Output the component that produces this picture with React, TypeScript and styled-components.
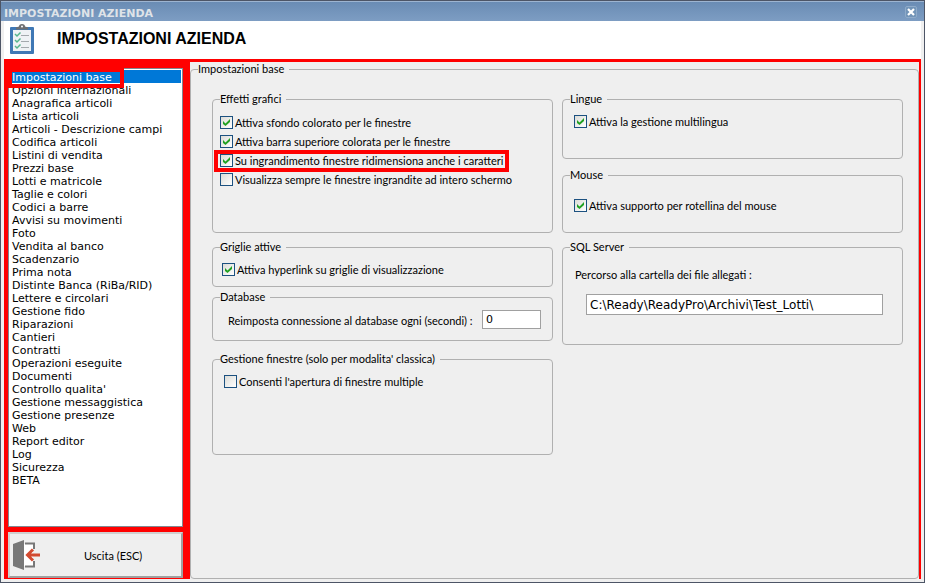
import React from "react";
import styled, { createGlobalStyle } from "styled-components";

const ui = 'Lato, "Liberation Sans", sans-serif';
const wide = '"DejaVu Sans", sans-serif';

const GlobalStyle = createGlobalStyle`
  * { box-sizing: border-box; }
  body { margin: 0; background: #efefef; color: #000; font: 11px/14px ${ui}; }
  button, input { font: inherit; color: inherit; }
`;

const Window = styled.div`
  display: flex;
  flex-direction: column;
  min-height: 100vh;
  border: 1px solid #4d5566;
  background: #efefef;
`;

const TitleBar = styled.header`
  display: flex;
  align-items: center;
  justify-content: space-between;
  height: 20px;
  padding: 4px 7px 0 3px;
  border-top: 1px solid #9db4d0;
  background: linear-gradient(#6a8cb4, #7d9dc3);
  color: #dfe3e8;
  font: bold 11px/14px ${wide};
`;

const CloseButton = styled.button`
  display: grid;
  place-items: center;
  align-self: flex-start;
  width: 12px;
  height: 12px;
  padding: 0;
  border: 1px solid #8fabc9;
  border-radius: 2px;
  background: #7294b8;
`;

const Heading = styled.div`
  display: flex;
  align-items: center;
  gap: 22px;
  height: 38px;
  margin: 0 3px;
  padding: 0 0 2px 5px;
  background: #fff;

  h1 { margin: 0; font: bold 16px/20px "Liberation Sans", sans-serif; }
`;

const Body = styled.div`
  display: flex;
  flex: 1;
  margin: 0 3px 3px;
  border: solid #f00;
  border-width: 3px 2px 0 4px;
`;

const Sidebar = styled.nav`
  display: flex;
  flex-direction: column;
  gap: 5px;
  flex: 0 0 182px;
  padding: 6px 7px 1px 0;
  background: #f00;
`;

const List = styled.ul`
  flex: 1;
  margin: 0;
  padding: 1px;
  list-style: none;
  background: #fff;
  border: 1px solid #828790;
  font: 11px/14px ${wide};
`;

const Item = styled.li<{ $selected?: boolean }>`
  position: relative;
  height: 13px;
  padding-left: 2px;
  background: ${(p) => (p.$selected ? "#0078d7" : "transparent")};

  a {
    display: block;
    color: ${(p) => (p.$selected ? "#fff" : "#000")};
    line-height: 15px;
    text-decoration: none;
    white-space: nowrap;
  }
`;

const ItemMarker = styled.span`
  position: absolute;
  z-index: 1;
  inset: -2px auto -5px -2px;
  width: 116px;
  border: 4px solid #f00;
`;

const ExitButton = styled.button`
  display: flex;
  align-items: center;
  height: 46px;
  padding: 0 3px;
  border: 2px solid;
  border-color: #d0d0d0 #a0a0a0 #a0a0a0 #d0d0d0;
  background: #efefef;

  span { flex: 1; padding: 2px 0 0 43px; text-align: left; }
`;

const Group = styled.fieldset<{ $height?: number; $gap?: number }>`
  min-width: 0;
  min-height: ${(p) => p.$height ?? 0}px;
  margin: ${(p) => p.$gap ?? 0}px 0 0;
  padding: 0 7px;
  border: 1px solid #b0b0b0;
  border-radius: 4px;

  > legend { height: 14px; padding: 0 5px 0 0; }
`;

const Page = styled(Group)`
  flex: 1;
`;

const Columns = styled.div`
  display: grid;
  grid-template-columns: repeat(2, minmax(0, 1fr));
  gap: 9px;
  padding: 16px 8px 16px 14px;
`;

const Options = styled.div<{ $top: number; $indent?: number }>`
  display: flex;
  flex-direction: column;
  align-items: flex-start;
  padding: ${(p) => p.$top}px 0 0 ${(p) => p.$indent ?? 0}px;
`;

const CheckLabel = styled.label<{ $marked?: boolean }>`
  position: relative;
  display: flex;
  align-items: center;
  gap: 2px;
  height: 19px;
  white-space: nowrap;

  &::after {
    content: "";
    display: ${(p) => (p.$marked ? "block" : "none")};
    position: absolute;
    inset: -1px -6px -2px;
    border: 4px solid #f00;
  }
`;

const CheckFrame = styled.span`
  display: grid;
  width: 13px;
  height: 13px;

  > * { grid-area: 1 / 1; }
  svg { pointer-events: none; }
`;

const Box = styled.input`
  appearance: none;
  width: 13px;
  height: 13px;
  margin: 0;
  border: 1px solid #1c5180;
  background: linear-gradient(135deg, #dcdcd7, #fff);

  & + svg { visibility: hidden; }
  &:checked + svg { visibility: visible; }
`;

const Field = styled.input`
  height: 19px;
  padding: 0 3px;
  border: 1px solid #a0a0a0;
  background: #fff;
  font: 11px/15px ${wide};
`;

const SecondsRow = styled.div`
  display: flex;
  align-items: center;
  justify-content: space-between;
  padding: 6px 4px 0 8px;

  label { padding-top: 2px; white-space: nowrap; }
  input { width: 59px; }
`;

const PathRow = styled.div`
  display: flex;
  flex-direction: column;
  gap: 12px;
  padding: 14px 12px 0 5px;

  input { margin-left: 11px; height: 21px; font-size: 12px; }
`;

const items = [
  "Impostazioni base", "Opzioni internazionali", "Anagrafica articoli", "Lista articoli",
  "Articoli - Descrizione campi", "Codifica articoli", "Listini di vendita", "Prezzi base",
  "Lotti e matricole", "Taglie e colori", "Codici a barre", "Avvisi su movimenti", "Foto",
  "Vendita al banco", "Scadenzario", "Prima nota", "Distinte Banca (RiBa/RID)",
  "Lettere e circolari", "Gestione fido", "Riparazioni", "Cantieri", "Contratti",
  "Operazioni eseguite", "Documenti", "Controllo qualita'", "Gestione messaggistica",
  "Gestione presenze", "Web", "Report editor", "Log", "Sicurezza", "BETA",
];

function Check({ label, on, marked }: { label: string; on?: boolean; marked?: boolean }) {
  return (
    <CheckLabel $marked={marked}>
      <CheckFrame>
        <Box type="checkbox" defaultChecked={on} />
        <svg width="13" height="13" viewBox="0 0 13 13" aria-hidden="true">
          <path d="M3 5l2.500 2.500L10 3v3L5.500 10 3 8z" fill="#21a121" />
        </svg>
      </CheckFrame>
      {label}
    </CheckLabel>
  );
}

const ClipboardIcon = () => (
  <svg width="26" height="32" viewBox="0 0 26 32" aria-hidden="true">
    <rect x="1" y="4" width="24" height="27" rx="1" fill="#3f78b5" />
    <rect x="4" y="7" width="18" height="21" fill="#eef2f5" />
    <path d="M7 6.500V4.500l3-1a3 2.500 0 0 1 6 0l3 1v2z" fill="#6d6e71" />
    <circle cx="13" cy="3.500" r="1" fill="#fff" />
    <path d="M6 11l2 2 3.500-3.500M6 17l2 2 3.500-3.500M6 23l2 2 3.500-3.500" fill="none" stroke="#55b58c" strokeWidth="1.500" />
    <path d="M12 12.500h8M12 18.500h8M12 24.500h8" stroke="#a3a9ad" />
  </svg>
);

const DoorIcon = () => (
  <svg width="28" height="30" viewBox="0 0 28 30" aria-hidden="true">
    <path d="M0 4L11 0v30L0 26z" fill="#787878" />
    <path d="M11 4h9v22h-9z" fill="#fff" />
    <path d="M12 3.500h9V9M12 26.500h9V21" fill="none" stroke="#787878" strokeWidth="2" />
    <path d="M27 15H15M20 9.500L14.500 15l5.500 5.500" fill="none" stroke="#d24a30" strokeWidth="3" />
  </svg>
);

export default function App() {
  return (
    <>
      <GlobalStyle />
      <Window>
        <TitleBar>
          <span>IMPOSTAZIONI AZIENDA</span>
          <CloseButton aria-label="Chiudi">
            <svg width="8" height="8" viewBox="0 0 8 8"><path d="M1 1l6 6M7 1L1 7" stroke="#fff" strokeWidth="2.200" /></svg>
          </CloseButton>
        </TitleBar>
        <Heading>
          <ClipboardIcon />
          <h1>IMPOSTAZIONI AZIENDA</h1>
        </Heading>
        <Body>
          <Sidebar>
            <List>
              {items.map((name, i) => (
                <Item key={name} $selected={i === 0}>
                  <a href="#">{name}</a>
                  {i === 0 && <ItemMarker />}
                </Item>
              ))}
            </List>
            <ExitButton>
              <DoorIcon />
              <span>Uscita (ESC)</span>
            </ExitButton>
          </Sidebar>
          <Page>
            <legend>Impostazioni base</legend>
            <Columns>
              <div>
                <Group $height={141}>
                  <legend>Effetti grafici</legend>
                  <Options $top={7}>
                    <Check label="Attiva sfondo colorato per le finestre" on />
                    <Check label="Attiva barra superiore colorata per le finestre" on />
                    <Check label="Su ingrandimento finestre ridimensiona anche i caratteri" on marked />
                    <Check label="Visualizza sempre le finestre ingrandite ad intero schermo" />
                  </Options>
                </Group>
                <Group $height={47} $gap={7}>
                  <legend>Griglie attive</legend>
                  <Options $top={6} $indent={2}>
                    <Check label="Attiva hyperlink su griglie di visualizzazione" on />
                  </Options>
                </Group>
                <Group $height={51} $gap={3}>
                  <legend>Database</legend>
                  <SecondsRow>
                    <label htmlFor="seconds">Reimposta connessione al database ogni (secondi) :</label>
                    <Field id="seconds" defaultValue="0" />
                  </SecondsRow>
                </Group>
                <Group $height={103} $gap={11}>
                  <legend>Gestione finestre (solo per modalita' classica)</legend>
                  <Options $top={6} $indent={4}>
                    <Check label="Consenti l'apertura di finestre multiple" />
                  </Options>
                </Group>
              </div>
              <div>
                <Group $height={67}>
                  <legend>Lingue</legend>
                  <Options $top={6} $indent={4}>
                    <Check label="Attiva la gestione multilingua" on />
                  </Options>
                </Group>
                <Group $height={65} $gap={9}>
                  <legend>Mouse</legend>
                  <Options $top={14} $indent={4}>
                    <Check label="Attiva supporto per rotellina del mouse" on />
                  </Options>
                </Group>
                <Group $height={105} $gap={7}>
                  <legend>SQL Server</legend>
                  <PathRow>
                    <label htmlFor="path">Percorso alla cartella dei file allegati :</label>
                    <Field id="path" defaultValue="C:\Ready\ReadyPro\Archivi\Test_Lotti\" />
                  </PathRow>
                </Group>
              </div>
            </Columns>
          </Page>
        </Body>
      </Window>
    </>
  );
}
